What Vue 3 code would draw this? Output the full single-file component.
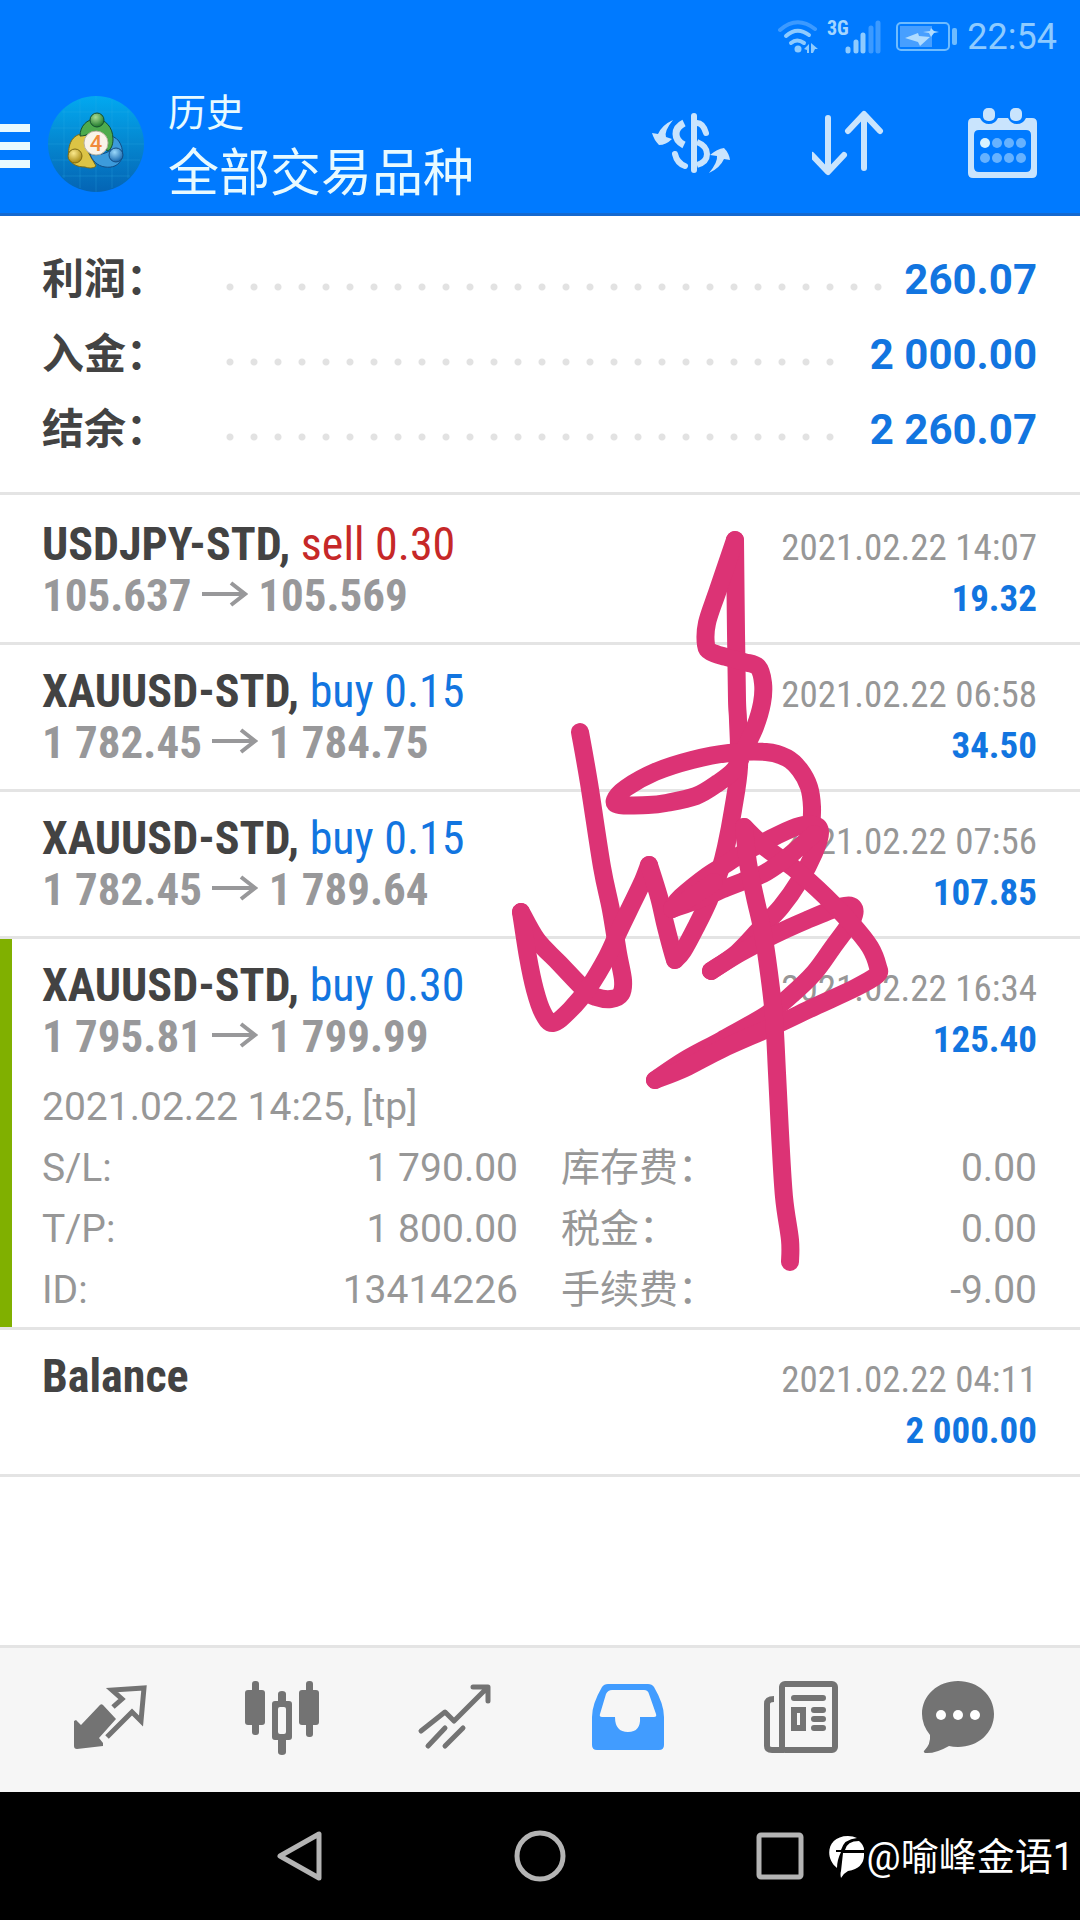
<template>
  <div class="app-page">
    <header class="app-header">
      <div class="status-bar">
        <svg class="wifi" viewBox="0 0 40 34" aria-hidden="true">
          <g fill="none" stroke="#8ecbff" stroke-width="4" stroke-linecap="round">
            <path d="M2 10Q19 -5 37 9" stroke="#3c9aff" />
            <path d="M8 16Q19 6 31 15" />
            <path d="M13 23Q19 18 26 23" />
          </g>
          <circle cx="20" cy="29" r="3.5" fill="#8ecbff" />
          <path d="M26 29l5-5v9h-2v-3zM33 23l7 6h-3l-2 4h-2z" fill="#8ecbff" />
        </svg>
        <svg class="signal" viewBox="0 -6 54 48" aria-hidden="true">
          <text x="0" y="16" class="net-type">3G</text>
          <g stroke="#8ecbff" stroke-width="5" stroke-linecap="round">
            <path d="M21 30v2M29 23v9M36 16v16" />
            <path d="M44 9v23M51 4v28" stroke="#3c9aff" />
          </g>
        </svg>
        <svg class="battery" viewBox="0 0 62 32" aria-hidden="true">
          <rect x="1" y="2" width="52" height="27" rx="4" fill="none" stroke="#6fbcff" stroke-width="2" />
          <rect x="4" y="5" width="32" height="21" fill="#479fff" />
          <path d="M9 17l13-5 1 3 11 1-10 9-2-4zM27 11l7-1 1-3 3 3 5 1-5 1-3 4-2-4z" fill="#b0dcff" />
          <rect x="56" y="7" width="5" height="17" rx="2" fill="#6fbcff" />
        </svg>
        <span class="clock">22:54</span>
      </div>
      <div class="toolbar">
        <button class="menu-btn" aria-label="菜单">
          <span></span><span></span><span></span>
        </button>
        <svg class="logo" viewBox="0 0 96 96" aria-hidden="true">
          <defs>
            <linearGradient id="bgGrad" x1="0" y1="0" x2="0" y2="1">
              <stop offset="0" stop-color="#02a9f0" />
              <stop offset="0.5" stop-color="#0586cf" />
              <stop offset="1" stop-color="#0464b4" />
            </linearGradient>
            <radialGradient id="greenGrad" cx="0.4" cy="0.3" r="0.7">
              <stop offset="0" stop-color="#a9dc93" />
              <stop offset="1" stop-color="#1f7a2c" />
            </radialGradient>
            <radialGradient id="goldGrad" cx="0.4" cy="0.3" r="0.7">
              <stop offset="0" stop-color="#fbe98c" />
              <stop offset="1" stop-color="#a98a12" />
            </radialGradient>
            <radialGradient id="blueGrad" cx="0.4" cy="0.3" r="0.7">
              <stop offset="0" stop-color="#9ad8fa" />
              <stop offset="1" stop-color="#1667ad" />
            </radialGradient>
          </defs>
          <circle cx="48" cy="48" r="48" fill="url(#bgGrad)" />
          <path d="M16 14v68M32 4v88M48 0v96M64 4v88M80 14v68M14 16h68M4 32h88M0 48h96M4 64h88M14 80h68" stroke="#35b4e8" stroke-opacity="0.25" fill="none" />
          <g stroke-width="1">
            <path d="M21 62c-2-14 4-24 14-24 5 0 4 8 3 13 3 8 8 15 10 19-3 3-8 2-11 1-8 0-14-3-16-9z" fill="#dcc445" stroke="#7d6a12" />
            <path d="M42 58c6 2 14 0 20-3 2-6 0-10 0-15 10 1 14 13 12 22-3 8-10 10-17 9-8-1-13-7-15-13z" fill="#3c9bdb" stroke="#124d85" />
            <path d="M32 40c0-10 7-17 16-17s17 8 17 20c0 6-2 11-6 12-2-8-4-16-11-20-6 1-8 5-16 5z" fill="#4dab4e" stroke="#16502f" />
            <circle cx="49" cy="24" r="7" fill="url(#greenGrad)" stroke="#16502f" />
            <circle cx="27" cy="60" r="7" fill="url(#goldGrad)" stroke="#7d6a12" />
            <circle cx="68" cy="59" r="7" fill="url(#blueGrad)" stroke="#124d85" />
          </g>
          <circle cx="48" cy="47" r="12" fill="#f8f3ea" stroke="#b9b3a0" />
          <text x="48" y="55" class="logo-num">4</text>
        </svg>
        <div class="titles">
          <div class="subtitle">历史</div>
          <h1>全部交易品种</h1>
        </div>
        <div class="actions">
          <button aria-label="品种">
            <svg width="80" height="72" viewBox="1 1 80 72">
              <g fill="none" stroke="#c9e4fd" stroke-width="6">
                <path d="M43 9v54" stroke-linecap="round" />
                <path d="M33 16q-8 4-8 11t8 11" stroke-width="7" />
                <path d="M46 16q6 0 9 10" stroke-linecap="round" />
                <path d="M46 35q10 4 10 12t-10 11" />
                <path d="M24 47q2 9 10 12" stroke-linecap="round" />
              </g>
              <path d="M22 13q-9 11-7 17l6 2q-6 6-13 6-5-5-7-12l6 1q4-9 15-14zM58 66q9-11 8-17l-7-1q7-6 14-7 5 5 6 12l-6-1q-4 9-15 14z" fill="#c9e4fd" />
            </svg>
          </button>
          <button aria-label="排序">
            <svg width="76" height="72" viewBox="5 1 76 72">
              <path d="M21 11v52M5 48l16 17 16-17M57 61V8M41 24L57 7l16 17" fill="none" stroke="#c9e4fd" stroke-width="6" stroke-linecap="round" stroke-linejoin="round" />
            </svg>
          </button>
          <button aria-label="日期">
            <svg width="70" height="72" viewBox="0 1 70 72">
              <path d="M5 11h7q3 6 9 6t9-6h10q3 6 9 6t9-6h6q5 0 5 5v50q0 5-5 5H5q-5 0-5-5V16q0-5 5-5zM11 23q-5 0-5 5v32q0 5 5 5h47q5 0 5-5V28q0-5-5-5z" fill="#c9e4fd" fill-rule="evenodd" />
              <rect x="15" y="1" width="12" height="13" rx="5" fill="#c9e4fd" />
              <rect x="42" y="1" width="12" height="13" rx="5" fill="#c9e4fd" />
              <circle cx="17" cy="36" r="5" fill="#d8f2ff" />
              <g fill="#66b2ff">
                <circle cx="29" cy="36" r="5" />
                <circle cx="41" cy="36" r="5" />
                <circle cx="53" cy="36" r="5" />
                <circle cx="17" cy="51" r="5" />
                <circle cx="29" cy="51" r="5" />
                <circle cx="41" cy="51" r="5" />
                <circle cx="53" cy="51" r="5" />
              </g>
            </svg>
          </button>
        </div>
      </div>
    </header>

    <main class="content">
      <section class="summary">
        <div v-for="item in summary" :key="item.label" class="summary-row">
          <span class="summary-label">{{ item.label }}</span>
          <span class="dots"></span>
          <span class="summary-value">{{ item.value }}</span>
        </div>
      </section>

      <ul class="trade-list">
        <li v-for="trade in trades" :key="trade.time" class="trade" :class="{ expanded: trade.details }">
          <div class="trade-line">
            <span class="symbol">{{ trade.symbol }}<template v-if="trade.side">, <span :class="trade.side">{{ trade.side }} {{ trade.volume }}</span></template></span>
            <span class="time">{{ trade.time }}</span>
          </div>
          <div class="trade-line">
            <span class="prices">
              <template v-if="trade.open">
                {{ trade.open }}
                <svg class="arrow" viewBox="0 0 46 26" role="img" aria-label="→">
                  <path d="M0 13h43M29 2l14 11-14 11" />
                </svg>
                {{ trade.close }}
              </template>
            </span>
            <span class="profit">{{ trade.profit }}</span>
          </div>
          <div v-if="trade.details" class="details">
            <p>{{ trade.comment }}</p>
            <dl>
              <div v-for="d in trade.details" :key="d.label">
                <dt>{{ d.label }}</dt>
                <dd>{{ d.value }}</dd>
              </div>
            </dl>
          </div>
        </li>
      </ul>

      <svg class="scribble" viewBox="510 525 380 755" aria-hidden="true">
        <path v-for="(s, i) in strokes" :key="i" :d="toPath(s)" />
      </svg>
    </main>

    <nav class="tab-bar">
      <button aria-label="行情">
        <svg viewBox="0 0 76 76">
          <path d="M32 25L45 39 28 58l4 5v3L6 69q-3 0-3-3V41l2-1 5 5 18-19q2-3 4-1z" fill="#737373" />
          <path d="M42 27l9-8-10-9L73 8l-3 33-9-9-25 25" fill="none" stroke="#737373" stroke-width="5" />
        </svg>
      </button>
      <button aria-label="图表">
        <svg viewBox="0 0 76 76">
          <g fill="#737373">
            <rect x="1" y="10" width="20" height="35" rx="3" />
            <rect x="8" y="1" width="7" height="54" rx="3" />
            <rect x="55" y="10" width="20" height="35" rx="3" />
            <rect x="62" y="1" width="7" height="56" rx="3" />
            <path d="M31 21h3V14q0-3 4-3t4 3v7h3q3 0 3 3v33q0 3-3 3h-3v12q0 3-4 3t-4-3V60h-3q-3 0-3-3V24q0-3 3-3zM36 27q-2 0-2 2v23q0 2 2 2h4q2 0 2-2V29q0-2-2-2z" fill-rule="evenodd" />
          </g>
        </svg>
      </button>
      <button aria-label="交易">
        <svg viewBox="0 0 76 76">
          <path d="M4 51l24-19 9 9L70 8M56 7h15v14M11 66l17-18M28 66l18-18" fill="none" stroke="#737373" stroke-width="5" stroke-linecap="round" stroke-linejoin="round" />
        </svg>
      </button>
      <button aria-label="历史" aria-current="page">
        <svg viewBox="0 0 76 76">
          <path d="M18 4h40q4 0 6 3 10 17 10 30v28q0 5-5 5H7q-5 0-5-5V37Q2 24 12 7q2-3 6-3zM22 10q-4 0-6 4L10 34q-1 3 2 3h13q0 15 13 15t12-15h14q3 0 2-3l-7-20q-1-4-5-4z" fill="#419cff" fill-rule="evenodd" />
        </svg>
      </button>
      <button aria-label="新闻">
        <svg viewBox="0 0 76 76">
          <g fill="none" stroke="#737373" stroke-width="6">
            <rect x="19" y="4" width="53" height="66" rx="3" />
            <path d="M11 19q-7 0-7 5v42q0 4 5 4h12" />
            <path d="M31 18h29M51 30h9M51 39h9M51 48h9" stroke-linecap="round" />
            <rect x="31" y="30" width="9" height="18" />
          </g>
        </svg>
      </button>
      <button aria-label="消息">
        <svg viewBox="0 0 76 76">
          <path d="M38 1c20 0 36 14 36 33S58 67 38 67q-5 0-9-1-14 8-24 7-2-1-1-2 7-7 6-16Q2 45 2 34C2 15 18 1 38 1z" fill="#737373" />
          <circle cx="21" cy="35" r="5" fill="#fff" />
          <circle cx="38" cy="35" r="5" fill="#fff" />
          <circle cx="55" cy="35" r="5" fill="#fff" />
        </svg>
      </button>
    </nav>

    <footer class="sys-nav">
      <button aria-label="返回">
        <svg viewBox="0 0 52 52"><path d="M45 4v44L6 26z" /></svg>
      </button>
      <button aria-label="主页">
        <svg viewBox="0 0 52 52"><circle cx="26" cy="26" r="23" /></svg>
      </button>
      <button aria-label="最近">
        <svg viewBox="0 0 52 52"><rect x="5" y="5" width="42" height="42" rx="2" /></svg>
      </button>
      <div class="watermark">
        <svg viewBox="0 0 36 42" aria-hidden="true">
          <path d="M8 32C-5 22 -2 0 19 0q5 0 9 2Q15 3 12 14H7v2h5Q8 24 8 32zM16 14Q18 5 30 5q5 4 5 9zM14 17h21q1 15-16 18-4 2-7 7-1-4 0-7z" fill="#fff" />
        </svg>
        <span>@喻峰金语1</span>
      </div>
    </footer>
  </div>
</template>

<script setup>
const summary = [
  { label: '利润：', value: '260.07' },
  { label: '入金：', value: '2 000.00' },
  { label: '结余：', value: '2 260.07' }
];

const trades = [
  { symbol: 'USDJPY-STD', side: 'sell', volume: '0.30', open: '105.637', close: '105.569', time: '2021.02.22 14:07', profit: '19.32' },
  { symbol: 'XAUUSD-STD', side: 'buy', volume: '0.15', open: '1 782.45', close: '1 784.75', time: '2021.02.22 06:58', profit: '34.50' },
  { symbol: 'XAUUSD-STD', side: 'buy', volume: '0.15', open: '1 782.45', close: '1 789.64', time: '2021.02.22 07:56', profit: '107.85' },
  {
    symbol: 'XAUUSD-STD',
    side: 'buy',
    volume: '0.30',
    open: '1 795.81',
    close: '1 799.99',
    time: '2021.02.22 16:34',
    profit: '125.40',
    comment: '2021.02.22 14:25, [tp]',
    details: [
      { label: 'S/L:', value: '1 790.00' },
      { label: '库存费：', value: '0.00' },
      { label: 'T/P:', value: '1 800.00' },
      { label: '税金：', value: '0.00' },
      { label: 'ID:', value: '13414226' },
      { label: '手续费：', value: '-9.00' }
    ]
  },
  { symbol: 'Balance', time: '2021.02.22 04:11', profit: '2 000.00' }
];

// pen points of the signature
const strokes = [
  [[580, 732], [589, 783], [602, 867], [611, 910], [618, 953], [623, 980], [621, 994], [611, 999], [596, 997], [585, 990], [559, 963], [537, 940], [521, 912]],
  [[521, 912], [528, 957], [535, 990], [543, 1013], [553, 1023], [570, 1010], [589, 987], [607, 957], [618, 933], [629, 910], [642, 883], [649, 865]],
  [[649, 865], [659, 897], [665, 923], [672, 950], [675, 960]],
  [[675, 960], [683, 951], [696, 927], [709, 900], [720, 870], [726, 847], [733, 810], [739, 767], [738, 720], [737, 700], [736, 633], [735, 540]],
  [[735, 540], [718, 590], [707, 623], [706, 645], [711, 652], [726, 657], [744, 662], [758, 667], [763, 683], [762, 703], [755, 727], [744, 750], [735, 769], [718, 783], [696, 796], [666, 803], [648, 805], [620, 805], [615, 800], [626, 788], [655, 772], [692, 760], [729, 753], [766, 752], [787, 758], [800, 770], [809, 787], [812, 807], [811, 830]],
  [[672, 908], [681, 897], [707, 876], [726, 864], [740, 855], [766, 841], [796, 827], [814, 825], [820, 833], [814, 853], [800, 880], [781, 907], [759, 930], [737, 953], [711, 971]],
  [[711, 971], [740, 953], [774, 935], [807, 920], [840, 907], [853, 907], [852, 920], [833, 947], [814, 973], [789, 997], [766, 1015], [722, 1040], [685, 1060], [655, 1080]],
  [[744, 827], [766, 848], [796, 870], [826, 897], [851, 923], [870, 947], [878, 967], [877, 975], [855, 988], [814, 1007], [774, 1026], [722, 1049], [685, 1068], [655, 1080]],
  [[672, 909], [700, 899], [726, 888], [744, 881], [763, 874], [780, 863], [796, 850], [814, 834]],
  [[672, 909], [690, 898], [714, 882]],
  [[744, 827], [748, 863], [755, 897], [763, 933], [769, 973], [774, 1017], [777, 1073], [780, 1133], [784, 1197], [790, 1240], [790, 1262]]
];

// smooth curve that passes through every point
function toPath(pts) {
  let d = `M${pts[0][0]} ${pts[0][1]}`;
  for (let i = 0; i < pts.length - 1; i++) {
    const p0 = pts[i - 1] || pts[i];
    const p1 = pts[i];
    const p2 = pts[i + 1];
    const p3 = pts[i + 2] || p2;
    d += `C${p1[0] + (p2[0] - p0[0]) / 6} ${p1[1] + (p2[1] - p0[1]) / 6} `;
    d += `${p2[0] - (p3[0] - p1[0]) / 6} ${p2[1] - (p3[1] - p1[1]) / 6} ${p2[0]} ${p2[1]}`;
  }
  return d;
}
</script>

<style>
body {
  margin: 0;
  background: #fff;
}
</style>

<style scoped>
.app-page {
  min-height: 100vh;
  display: flex;
  flex-direction: column;
  background: #fff;
  font-family: Roboto, "Noto Sans CJK SC", sans-serif;
  color: #434343;
}

button {
  display: flex;
  align-items: center;
  justify-content: center;
  padding: 0;
  border: none;
  background: none;
}

.app-header {
  background: #007aff;
  border-bottom: 3px solid #1569cf;
}

.status-bar {
  display: flex;
  align-items: center;
  justify-content: flex-end;
  height: 74px;
  padding-right: 23px;
}

.wifi {
  width: 40px;
  height: 34px;
  margin-right: 9px;
}

.signal {
  width: 54px;
  height: 48px;
  margin-right: 15px;
}

.net-type {
  font-family: "Roboto Condensed", "Liberation Sans Narrow", Roboto, sans-serif;
  font-size: 20px;
  font-weight: 700;
  fill: #a5d6ff;
}

.battery {
  width: 62px;
  height: 32px;
  margin-right: 9px;
}

.clock {
  font-size: 36px;
  color: #8ecbff;
}

.toolbar {
  display: flex;
  align-items: center;
  height: 139px;
  padding-right: 42px;
}

.menu-btn {
  flex-direction: column;
  align-items: stretch;
  gap: 10px;
  width: 30px;
  padding-top: 4px;
}

.menu-btn span {
  height: 8px;
  background: #e8faff;
}

.logo {
  width: 96px;
  height: 96px;
  margin-left: 18px;
}

.logo-num {
  font-family: Roboto, sans-serif;
  font-size: 22px;
  font-weight: 500;
  text-anchor: middle;
  fill: #f08a3c;
}

.titles {
  flex: 1;
  margin-left: 24px;
  color: #e8faff;
}

.subtitle {
  font-size: 38px;
  line-height: 60px;
}

.titles h1 {
  margin: 0;
  font-size: 51px;
  line-height: 62px;
  font-weight: 400;
}

.actions {
  display: flex;
  align-items: center;
  gap: 80px;
}

.content {
  position: relative;
  flex: 1;
}

.summary {
  padding: 26px 43px 25px 42px;
  border-bottom: 3px solid #e4e4e4;
}

.summary-row {
  display: flex;
  align-items: baseline;
  height: 75px;
  font-size: 42px;
  line-height: 75px;
  font-weight: 700;
}

.summary-label {
  width: 176px;
}

.dots {
  flex: 1;
  align-self: center;
  height: 8px;
  margin: 14px 22px 0 0;
  background: radial-gradient(circle at 12px 4px, #e2e2e2 3px, transparent 4px) 0 0 / 24px 8px repeat-x;
}

.summary-value {
  color: #1275e0;
}

.trade-list {
  margin: 0;
  padding: 3px 0 0;
  list-style: none;
}

.trade {
  padding: 21px 43px 21px 42px;
  border-bottom: 3px solid #e4e4e4;
  font-family: "Roboto Condensed", "Liberation Sans Narrow", Roboto, sans-serif;
}

.trade.expanded {
  padding-bottom: 6px;
  background: linear-gradient(#80b000, #80b000) 0 0 / 12px 100% no-repeat;
}

.trade-line {
  display: flex;
  justify-content: space-between;
  align-items: baseline;
  height: 51px;
  font-size: 46px;
  line-height: 51px;
  font-weight: 700;
}

.prices {
  color: #98989a;
  font-size: 45px;
}

/* keeps the line's baseline when a row has no prices */
.prices::before {
  content: "\200b";
}

.arrow {
  width: 46px;
  height: 26px;
  vertical-align: 4px;
  fill: none;
  stroke: #98989a;
  stroke-width: 4px;
}

.sell {
  color: #c62828;
  font-weight: 400;
}

.buy {
  color: #1275e0;
  font-weight: 400;
}

.time {
  color: #979797;
  font-size: 37px;
  line-height: 40px;
  font-weight: 400;
}

.profit {
  color: #1275e0;
  font-size: 37px;
  line-height: 40px;
}

.details {
  margin-top: 15px;
  font-family: Roboto, "Noto Sans CJK SC", sans-serif;
  font-size: 39px;
  line-height: 61px;
  color: #979797;
}

.details p {
  margin: 0;
}

.details dl {
  display: grid;
  grid-template-columns: 1fr 1fr;
  column-gap: 43px;
  margin: 0;
}

.details dl div {
  display: flex;
  justify-content: space-between;
}

.details dd {
  margin: 0;
}

.scribble {
  position: absolute;
  top: 309px;
  right: 190px;
  width: 380px;
  height: 755px;
  fill: none;
  stroke: #dc3375;
  stroke-width: 18px;
  stroke-linecap: round;
  stroke-linejoin: round;
  pointer-events: none;
}

.tab-bar {
  display: grid;
  grid-template-columns: repeat(5, 173fr) 142fr;
  height: 140px;
  padding: 0 51px 4px 22px;
  background: #f6f6f6;
  border-top: 3px solid #e4e4e4;
}

.tab-bar svg {
  width: 76px;
  height: 76px;
}

.sys-nav {
  position: relative;
  display: grid;
  grid-template-columns: repeat(3, 1fr);
  height: 128px;
  padding: 0 180px;
  background: #000;
}

.sys-nav button svg {
  width: 52px;
  height: 52px;
  fill: none;
  stroke: #b4b4b4;
  stroke-width: 5px;
  stroke-linejoin: round;
}

.watermark {
  position: absolute;
  right: 6px;
  top: 37px;
  display: flex;
  align-items: center;
  gap: 2px;
  color: #fff;
  font-size: 38px;
  line-height: 56px;
}

.watermark svg {
  width: 36px;
  height: 42px;
}
</style>
